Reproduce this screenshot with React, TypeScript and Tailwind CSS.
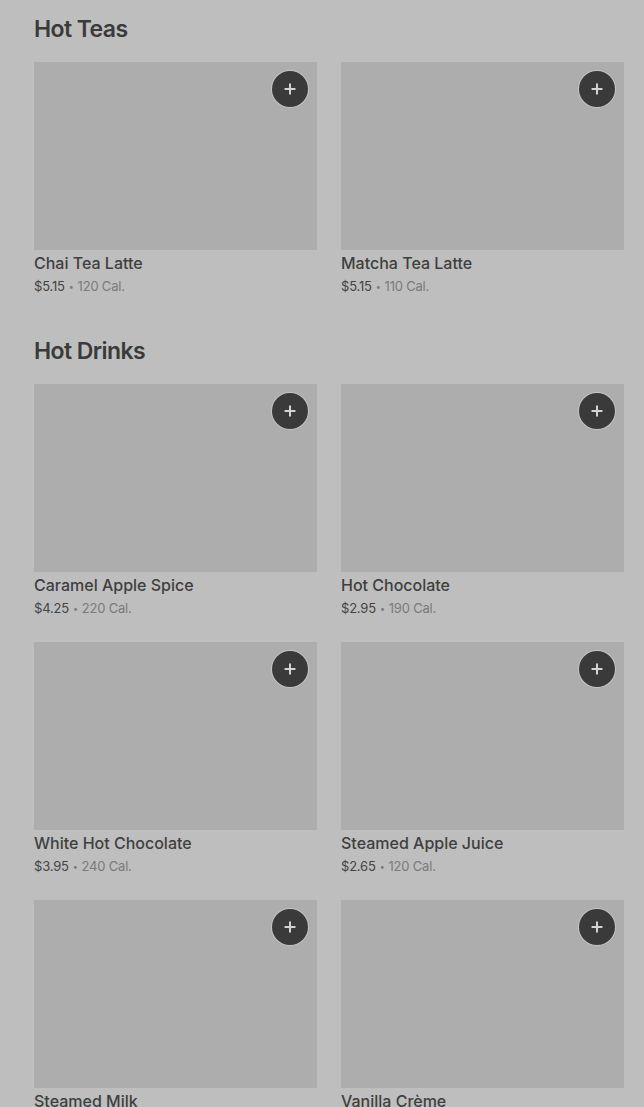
import { Plus } from "lucide-react";

type Item = { name: string; price: string; cal: string };

const sections: { title: string; items: Item[] }[] = [
  {
    title: "Hot Teas",
    items: [
      { name: "Chai Tea Latte", price: "$5.15", cal: "120 Cal." },
      { name: "Matcha Tea Latte", price: "$5.15", cal: "110 Cal." },
    ],
  },
  {
    title: "Hot Drinks",
    items: [
      { name: "Caramel Apple Spice", price: "$4.25", cal: "220 Cal." },
      { name: "Hot Chocolate", price: "$2.95", cal: "190 Cal." },
      { name: "White Hot Chocolate", price: "$3.95", cal: "240 Cal." },
      { name: "Steamed Apple Juice", price: "$2.65", cal: "120 Cal." },
      { name: "Steamed Milk", price: "$2.45", cal: "180 Cal." },
      { name: "Vanilla Crème", price: "$3.45", cal: "200 Cal." },
    ],
  },
];

const Card = ({ item }: { item: Item }) => {
  return (
    <div>
      <div className="relative h-[188px] bg-[#adadad]">
        <button className="absolute right-[9px] top-[9px] flex h-9 w-9 items-center justify-center rounded-full bg-[#3a3a3a] ring-1 ring-[#c4c4c4]">
          <Plus size={16} strokeWidth={3} className="text-[#d4d4d4]" />
        </button>
      </div>
      <div className="mt-[3px] text-[16px] font-medium leading-5 text-[#3f3f3f]">
        {item.name}
      </div>
      <div className="mt-[3px] flex h-5 items-center text-[13px] leading-5 tracking-[-0.2px]">
        <span className="text-[#444]">{item.price}</span>
        <span className="mx-[4px] text-[9px] leading-none text-[#7a7a7a]">•</span>
        <span className="text-[#7a7a7a]">{item.cal}</span>
      </div>
    </div>
  );
};

export default function App() {
  return (
    <div
      className="min-h-[1107px] overflow-hidden bg-[#bebebe] pl-[34px] pr-5 pt-[15px]"
      style={{ fontFamily: "Inter, 'Noto Sans', sans-serif" }}
    >
      <div className="flex flex-col gap-[41px]">
        {sections.map((s) => (
          <section key={s.title}>
            <h2 className="text-[23px] font-semibold leading-7 tracking-tight text-[#3a3a3a]">
              {s.title}
            </h2>
            <div className="mt-[19px] grid grid-cols-2 gap-x-6 gap-y-6">
              {s.items.map((it) => (
                <Card key={it.name} item={it} />
              ))}
            </div>
          </section>
        ))}
      </div>
    </div>
  );
}
